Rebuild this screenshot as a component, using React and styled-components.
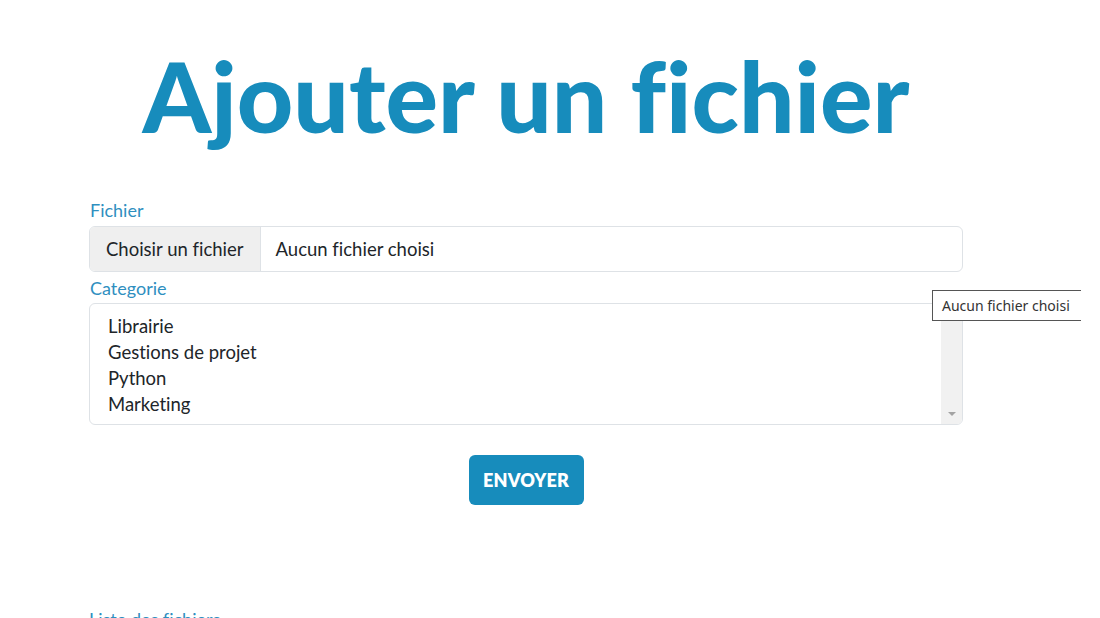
import React from "react";
import styled, { createGlobalStyle } from "styled-components";

const GlobalStyle = createGlobalStyle`
  html, body {
    margin: 0;
    padding: 0;
    background: #fff;
    overflow: hidden;
    font-family: Lato, "Liberation Sans", sans-serif;
    font-variant-ligatures: none;
    color: #212529;
  }
`;

const Page = styled.div`
  position: relative;
  width: 1100px;
  height: 618px;
  overflow: hidden;
`;

const Container = styled.div`
  width: 874px;
  margin-left: 89px;
  display: flex;
  flex-direction: column;
`;

const Title = styled.h1`
  margin: 40px 0 0;
  text-align: center;
  font-size: 98px;
  line-height: 110px;
  font-weight: 900;
  color: #178cbc;
  font-variant-ligatures: none;
`;

const Form = styled.form`
  margin-top: 48px;
  display: flex;
  flex-direction: column;
`;

const Label = styled.label`
  font-size: 18px;
  line-height: 24px;
  color: #2f8fbf;
  padding-left: 1px;
  margin-bottom: ${(p) => p.$gap || 4}px;
`;

const FileBox = styled.div`
  display: flex;
  box-sizing: border-box;
  height: 46px;
  border: 1px solid #dee2e6;
  border-radius: 6px;
  overflow: hidden;
  margin-bottom: 4px;
`;

const FileButton = styled.div`
  display: flex;
  align-items: center;
  padding: 0 16px 0 16px;
  background: #efefef;
  border-right: 1px solid #dee2e6;
  font-size: 18.5px;
  color: #212529;
`;

const FileName = styled.div`
  display: flex;
  align-items: center;
  padding-left: 15px;
  font-size: 18.5px;
  color: #212529;
`;

const SelectBox = styled.div`
  display: flex;
  box-sizing: border-box;
  height: 122px;
  border: 1px solid #dee2e6;
  border-radius: 6px;
  overflow: hidden;
`;

const OptionList = styled.div`
  flex: 1;
  padding: 9px 18px;
  display: flex;
  flex-direction: column;
`;

const Option = styled.div`
  font-size: 18.5px;
  line-height: 26px;
  color: #212529;
`;

const Scrollbar = styled.div`
  width: 21px;
  background: #f1f1f1;
  display: flex;
  align-items: flex-end;
  justify-content: center;
  padding-bottom: 8px;
  box-sizing: border-box;
`;

const Arrow = styled.div`
  width: 0;
  height: 0;
  border-left: 4px solid transparent;
  border-right: 4px solid transparent;
  border-top: 4px solid #a3a3a3;
`;

const ButtonRow = styled.div`
  display: flex;
  justify-content: center;
  margin-top: 30px;
`;

const SubmitButton = styled.button`
  width: 115px;
  height: 50px;
  border: none;
  border-radius: 6px;
  background: #178cbc;
  color: #fff;
  font-family: Lato, "Liberation Sans", sans-serif;
  font-size: 18px;
  font-weight: 800;
  text-transform: uppercase;
  letter-spacing: 0.2px;
`;

const ListTitle = styled.h2`
  margin: 103px 0 0;
  font-size: 18px;
  font-weight: 400;
  color: #2f8fbf;
`;

const Tooltip = styled.div`
  position: absolute;
  left: 932px;
  top: 290px;
  width: 149px;
  height: 31px;
  box-sizing: border-box;
  border: 1px solid #555;
  border-right: none;
  background: #fff;
  font-family: "Noto Sans", sans-serif;
  font-size: 14px;
  line-height: 29px;
  padding-left: 9px;
  color: #333;
  white-space: nowrap;
`;

const categories = ["Librairie", "Gestions de projet", "Python", "Marketing"];

export default function App() {
  return (
    <Page>
      <GlobalStyle />
      <Container>
        <Title>Ajouter un fichier</Title>
        <Form>
          <Label>Fichier</Label>
          <FileBox>
            <FileButton>Choisir un fichier</FileButton>
            <FileName>Aucun fichier choisi</FileName>
          </FileBox>
          <Label $gap={3}>Categorie</Label>
          <SelectBox>
            <OptionList>
              {categories.map((c) => (
                <Option key={c}>{c}</Option>
              ))}
            </OptionList>
            <Scrollbar>
              <Arrow />
            </Scrollbar>
          </SelectBox>
          <ButtonRow>
            <SubmitButton type="button">Envoyer</SubmitButton>
          </ButtonRow>
        </Form>
        <ListTitle>Liste des fichiers</ListTitle>
      </Container>
      <Tooltip>Aucun fichier choisi</Tooltip>
    </Page>
  );
}
